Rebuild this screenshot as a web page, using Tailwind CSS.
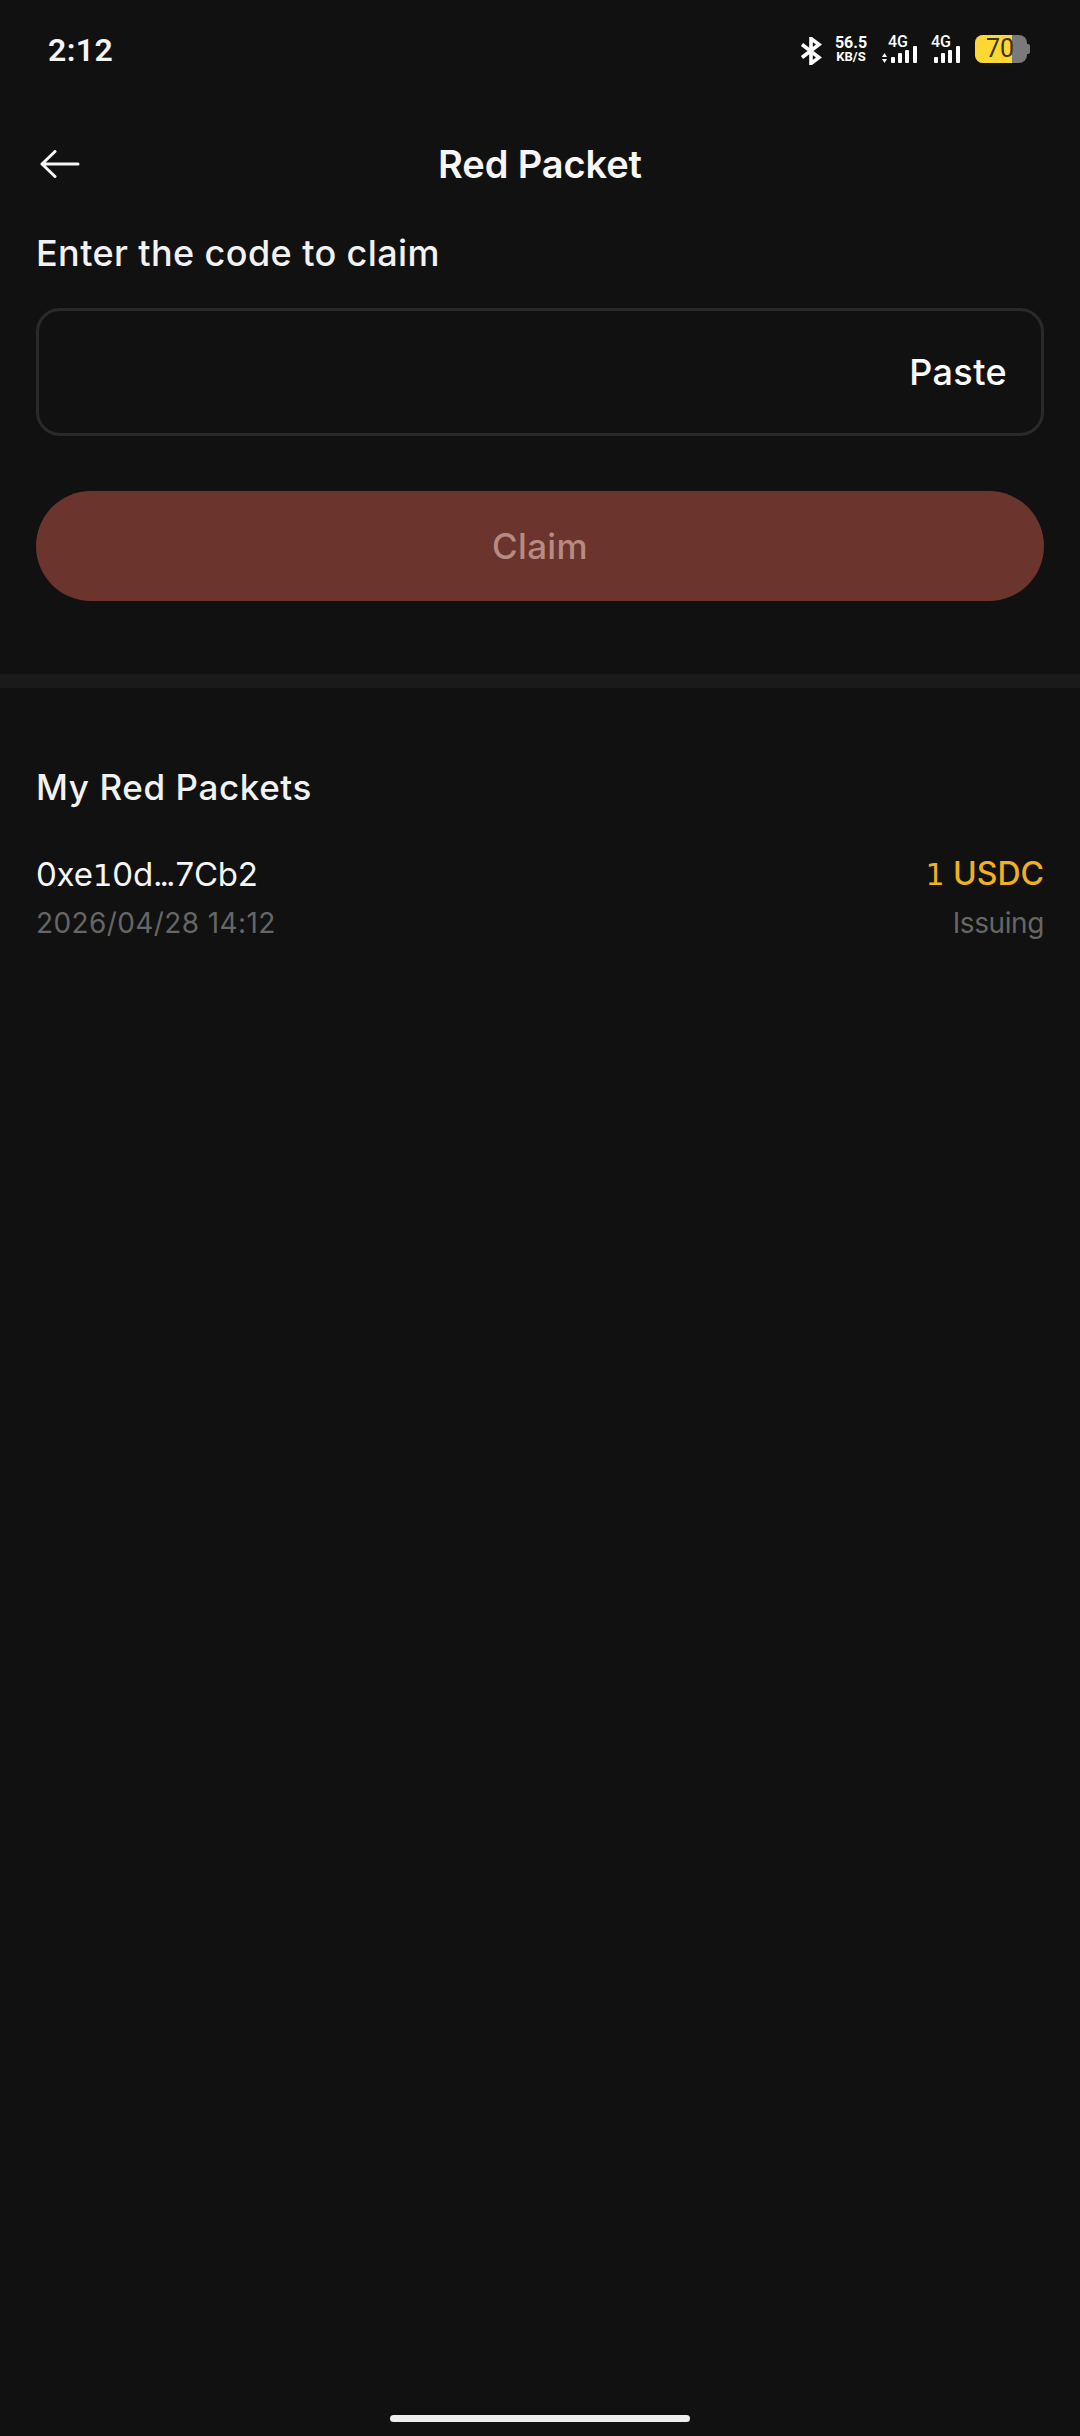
<!DOCTYPE html>
<html lang="en"><head><meta charset="utf-8">
<script src="https://cdn.jsdelivr.net/npm/@tailwindcss/browser@4"></script>
<title>Red Packet</title></head>
<body class="m-0 bg-[#111111]">
<div class="relative w-[1080px] h-[2436px] bg-[#111111] text-white font-['Inter','Liberation_Sans',sans-serif] overflow-hidden">
  <!-- status bar -->
  <div class="h-[125px] flex items-start justify-between pl-[48px] pr-[50px] pt-[28px]">
    <span class="font-['Roboto',sans-serif] font-semibold text-[32px] leading-[44px] tracking-[0.4px] text-[#f5f5f5]">2:12</span>
    <div class="flex items-center h-[42px] text-white font-['Roboto',sans-serif]">
      <svg class="w-[22px] h-[28px] mr-[12px] mt-[3px]" viewBox="0 0 22 28" fill="none" stroke="#fff" stroke-width="3.6"><path d="M2 7.5 19 20.5 11 26.5V1.5L19 7.5 2 20.5"/></svg>
      <div class="flex flex-col items-center w-[34px] mr-[14px] font-bold leading-none">
        <span class="text-[16px] leading-[15px]">56.5</span><span class="text-[13px] leading-[14px]">KB/S</span>
      </div>
      <div class="relative w-[36px] h-[30px] mr-[13px]">
        <span class="absolute left-[6px] top-0 text-[16px] leading-[16px] font-medium">4G</span>
        <svg class="absolute left-0 top-0 w-[36px] h-[30px]" viewBox="0 0 36 30" fill="#fff"><path d="M2.5 19 5 23H0ZM2.5 29 0 25H5Z"/><rect x="9" y="23" width="4" height="6" rx="1"/><rect x="16" y="19" width="4" height="10" rx="1"/><rect x="23" y="16" width="4" height="13" rx="1"/><rect x="31" y="12" width="4" height="17" rx="1"/></svg>
      </div>
      <div class="relative w-[30px] h-[30px] mr-[14px]">
        <span class="absolute left-0 top-0 text-[16px] leading-[16px] font-medium">4G</span>
        <svg class="absolute left-0 top-0 w-[30px] h-[30px]" viewBox="0 0 30 30" fill="#fff"><rect x="3" y="23" width="4" height="6" rx="1"/><rect x="10" y="19" width="4" height="10" rx="1"/><rect x="17" y="16" width="4" height="13" rx="1"/><rect x="25" y="12" width="4" height="17" rx="1"/></svg>
      </div>
      <div class="relative flex items-center">
        <div class="relative w-[52px] h-[28px] rounded-[8px] bg-[#7a7a7a] overflow-hidden">
          <div class="w-[37px] h-full bg-[#fdd835]"></div>
          <span class="absolute left-[11px] top-0 text-[25px] leading-[28px] text-[#3a3210]">70</span>
        </div>
        <div class="w-[3px] h-[10px] rounded-r-[2px] bg-[#7a7a7a]"></div>
      </div>
    </div>
  </div>
  <!-- header -->
  <div class="relative h-[78px] flex items-center justify-center">
    <svg class="absolute left-[40px] top-[25px] w-[40px] h-[30px]" viewBox="0 0 40 30" fill="none" stroke="#f5f5f5" stroke-width="3" stroke-linecap="round" stroke-linejoin="round"><path d="M2 14H38M15 1.5 2 14 15 26.5"/></svg>
    <h1 class="font-semibold text-[38px] leading-[48px] tracking-[-0.1px] text-[#f7f7f7]">Red Packet</h1>
  </div>
  <!-- claim form -->
  <div class="px-[36px]">
    <h2 class="mt-[27px] font-medium text-[36px] leading-[46px] text-[#f2f2f2] tracking-[0.4px]">Enter the code to claim</h2>
    <div class="mt-[32px] h-[128px] rounded-[24px] border-[3px] border-[#2a2a2a] flex items-center justify-end pr-[34px]">
      <span class="font-medium text-[36px] text-white tracking-[0.4px]">Paste</span>
    </div>
    <button class="mt-[55px] w-full h-[110px] rounded-full bg-[#6b342c] text-[35px] font-medium text-[#b78a83] flex items-center justify-center tracking-[0.3px]">Claim</button>
  </div>
  <div class="mt-[73px] h-[14px] bg-[#1a1a1a]"></div>
  <!-- list -->
  <div class="px-[36px] pt-[76px]">
    <h2 class="font-medium text-[35px] leading-[46px] text-[#f2f2f2] tracking-[0.6px]">My Red Packets</h2>
    <div class="mt-[42px] flex justify-between">
      <div>
        <div class="text-[33px] leading-[44px] text-[#f5f5f5] tracking-[-0.2px]">0xe<span class="font-['DejaVu_Sans'] text-[31px]">1</span>0d<span class="tracking-[-3px]">...</span><span class="ml-[3px]">7Cb2</span></div>
        <div class="mt-[6px] text-[28px] leading-[40px] text-[#666666] tracking-[0.4px]">2026/04/28 14:12</div>
      </div>
      <div class="text-right">
        <div class="text-[32px] leading-[44px] font-medium text-[#f0b020]"><span class="font-['DejaVu_Sans'] text-[30px]">1</span> USDC</div>
        <div class="mt-[6px] text-[28px] leading-[40px] text-[#666666] tracking-[-0.4px]">Issuing</div>
      </div>
    </div>
  </div>
  <!-- home indicator -->
  <div class="absolute left-[390px] top-[2415px] w-[300px] h-[7px] rounded-full bg-[#efefef]"></div>
</div>
</body></html>
